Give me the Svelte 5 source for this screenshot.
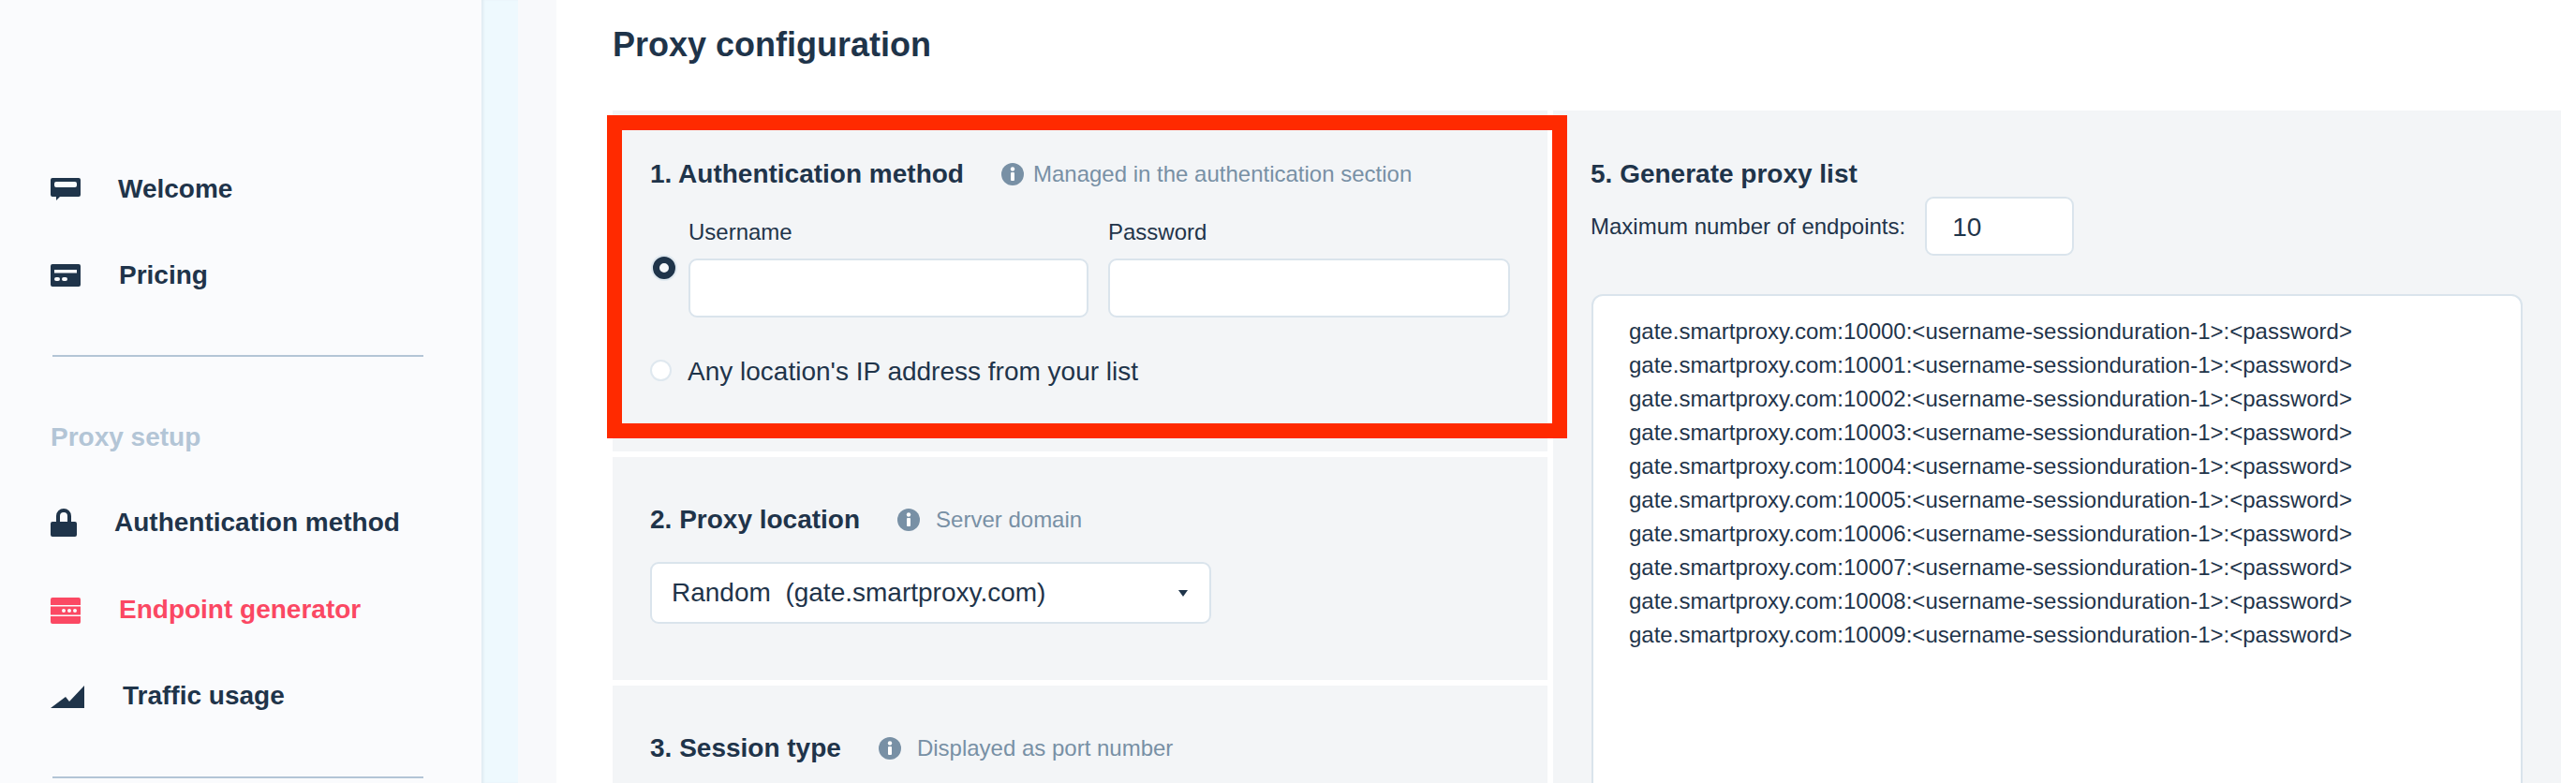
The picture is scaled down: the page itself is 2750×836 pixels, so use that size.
<script>
  const endpoints = Array.from({ length: 10 }, (_, i) => `gate.smartproxy.com:${10000 + i}:<username-sessionduration-1>:<password>`);
</script>

<div class="page">
  <aside class="sidebar">
    <nav class="nav">
      <a class="item welcome">
        <svg width="32" height="24" viewBox="0 0 32 24"><path fill-rule="evenodd" d="M2 0h28a2 2 0 0 1 2 2v16a2 2 0 0 1-2 2H10l-4 4v-4H2a2 2 0 0 1-2-2V2a2 2 0 0 1 2-2Zm4 4a2 2 0 0 0-2 2v2a2 2 0 0 0 2 2h20a2 2 0 0 0 2-2V6a2 2 0 0 0-2-2Z" /></svg>
        <span>Welcome</span>
      </a>
      <a class="item pricing">
        <svg width="32" height="24" viewBox="0 0 32 24"><path fill-rule="evenodd" d="M2 0h28a2 2 0 0 1 2 2v20a2 2 0 0 1-2 2H2a2 2 0 0 1-2-2V2a2 2 0 0 1 2-2Zm2 6v3.500h24V6ZM6 14a2 2 0 0 0 0 4h2a2 2 0 0 0 0-4Zm8 0a2 2 0 0 0 0 4h2a2 2 0 0 0 0-4Z" /></svg>
        <span>Pricing</span>
      </a>
      <hr />
      <div class="group">Proxy setup</div>
      <a class="item auth">
        <svg width="28" height="30" viewBox="0 0 28 30"><path fill-rule="evenodd" d="M6 14V8a8 8 0 0 1 16 0v6h4a2 2 0 0 1 2 2v12a2 2 0 0 1-2 2H2a2 2 0 0 1-2-2V16a2 2 0 0 1 2-2Zm4 0h8V8a4 4 0 0 0-8 0Z" /></svg>
        <span>Authentication method</span>
      </a>
      <a class="item active">
        <svg width="32" height="28" viewBox="0 0 32 28"><path d="M2 0h28a2 2 0 0 1 2 2v6H0V2a2 2 0 0 1 2-2ZM0 9.500h32v9H0ZM0 20h32v6a2 2 0 0 1-2 2H2a2 2 0 0 1-2-2Z" /><circle class="dot" cx="14" cy="14" r="2" /><circle class="dot" cx="20" cy="14" r="2" /><circle class="dot" cx="26" cy="14" r="2" /></svg>
        <span>Endpoint generator</span>
      </a>
      <a class="item traffic">
        <svg width="36" height="24" viewBox="0 0 36 24"><path d="M0 24 16 12l4 5L36 0v24Z" /></svg>
        <span>Traffic usage</span>
      </a>
      <hr />
    </nav>
  </aside>
  <div class="gutter"></div>
  <div class="gutter-two"></div>

  <main class="main">
    <h1>Proxy configuration</h1>
    <div class="columns">
      <div class="left">
        <section class="card first">
          <div class="heading">
            <h2>1. Authentication method</h2>
            <svg class="info" width="24" height="24" viewBox="0 0 24 24"><circle cx="12" cy="12" r="12" /><rect x="10" y="10" width="4" height="9" rx="1" /><circle cx="12" cy="6.500" r="2.200" /></svg>
            <span class="hint near">Managed in the authentication section</span>
          </div>
          <div class="auth-row">
            <span class="radio checked"></span>
            <label class="field">
              <span>Username</span>
              <input type="text" />
            </label>
            <label class="field">
              <span>Password</span>
              <input class="wide" type="password" />
            </label>
          </div>
          <div class="ip-row">
            <span class="radio"></span>
            <span>Any location's IP address from your list</span>
          </div>
          <div class="highlight"></div>
        </section>

        <section class="card second">
          <div class="heading">
            <h2>2. Proxy location</h2>
            <svg class="info" width="24" height="24" viewBox="0 0 24 24"><circle cx="12" cy="12" r="12" /><rect x="10" y="10" width="4" height="9" rx="1" /><circle cx="12" cy="6.500" r="2.200" /></svg>
            <span class="hint">Server domain</span>
          </div>
          <div class="select">
            <span>Random &nbsp;(gate.smartproxy.com)</span>
            <i class="caret"></i>
          </div>
        </section>

        <section class="card third">
          <div class="heading">
            <h2>3. Session type</h2>
            <svg class="info" width="24" height="24" viewBox="0 0 24 24"><circle cx="12" cy="12" r="12" /><rect x="10" y="10" width="4" height="9" rx="1" /><circle cx="12" cy="6.500" r="2.200" /></svg>
            <span class="hint">Displayed as port number</span>
          </div>
        </section>
      </div>

      <section class="right">
        <h2>5. Generate proxy list</h2>
        <div class="max-row">
          <span>Maximum number of endpoints:</span>
          <div class="number">10</div>
        </div>
        <div class="list">
          {#each endpoints as line}
            <div>{line}</div>
          {/each}
        </div>
      </section>
    </div>
  </main>
</div>

<style>
  :global(body) {
    margin: 0;
    background: #fff;
  }

  .page {
    display: flex;
    width: 2750px;
    height: 836px;
    overflow: hidden;
    font-family: 'Liberation Sans', Arial, sans-serif;
    color: #1f344a;
  }

  .sidebar {
    width: 514px;
    flex: none;
    background: #fafbfd;
    box-sizing: border-box;
    padding: 178px 0 0 54px;
  }

  .gutter {
    width: 39px;
    flex: none;
    background: #eef9fe;
    box-shadow: inset 3px 0 3px -1px #dfeaf1;
  }

  .gutter-two {
    width: 41px;
    flex: none;
    background: #f8f9fb;
  }

  .nav {
    display: flex;
    flex-direction: column;
    width: 398px;
  }

  .item {
    display: flex;
    align-items: center;
    height: 48px;
    margin-bottom: 44px;
    font-size: 28px;
    font-weight: 700;
  }

  .item svg {
    flex: none;
    fill: #1f344a;
  }

  .welcome svg { margin-right: 40px; }
  .pricing svg { margin-right: 41px; }
  .auth { margin-bottom: 45px; }
  .auth svg { margin-right: 40px; }
  .active svg { margin: 2px 41px 0 0; }
  .traffic { margin-bottom: 45px; }
  .traffic svg { margin: 2px 41px 0 0; }

  .active {
    color: #fb4863;
  }

  .active svg {
    fill: #fb4863;
  }

  .dot {
    fill: #fafbfd;
  }

  hr {
    width: 396px;
    margin: 17px 0 0 2px;
    border: none;
    border-top: 2px solid #b3c5d6;
  }

  .group {
    margin: 70px 0 51px 0;
    font-size: 28px;
    line-height: 32px;
    font-weight: 700;
    color: #b3c5d6;
  }

  .main {
    flex: 1;
    min-width: 0;
    padding: 0 16px 0 60px;
  }

  h1 {
    margin: 0;
    height: 118px;
    box-sizing: border-box;
    padding-top: 26px;
    font-size: 36px;
    line-height: 44px;
    font-weight: 700;
  }

  .columns {
    display: flex;
    gap: 6px;
  }

  .left {
    width: 998px;
    flex: none;
    display: flex;
    flex-direction: column;
    gap: 6px;
  }

  .card {
    position: relative;
    background: #f3f5f7;
    padding: 0 40px;
    box-sizing: border-box;
  }

  .first { height: 364px; padding-top: 52px; }
  .second { height: 238px; padding-top: 51px; }
  .third { height: 110px; padding-top: 51px; }

  /* red annotation drawn over the screenshot */
  .highlight {
    position: absolute;
    left: -6px;
    right: -21px;
    top: 5px;
    height: 345px;
    box-sizing: border-box;
    border: 16px solid #ff2a00;
    pointer-events: none;
  }

  .heading {
    display: flex;
    align-items: center;
    height: 32px;
  }

  h2 {
    margin: 0;
    font-size: 28px;
    line-height: 32px;
    font-weight: 700;
  }

  .info {
    flex: none;
    margin-left: 40px;
    fill: #fff;
  }

  .info circle:first-child {
    fill: #7890a5;
  }

  .hint {
    margin-left: 17px;
    font-size: 24px;
    color: #7890a5;
  }

  .hint.near {
    margin-left: 10px;
  }

  .auth-row {
    display: flex;
    align-items: flex-start;
    margin-top: 32px;
    gap: 21px;
  }

  .radio {
    flex: none;
    box-sizing: border-box;
    width: 23px;
    height: 23px;
    margin-top: -3px;
    border-radius: 50%;
    background: #fff;
    border: 2px solid #dfe8ef;
  }

  .radio.checked {
    width: 24px;
    height: 24px;
    margin: 40px -7px 0 3px;
    background: #f6f8fa;
    border: 7px solid #1f344a;
    box-shadow: 0 0 0 2px #dfe8ef;
  }

  .field {
    display: flex;
    flex-direction: column;
    font-size: 24px;
  }

  .field span {
    height: 28px;
    line-height: 28px;
    margin-bottom: 14px;
  }

  input {
    box-sizing: border-box;
    width: 427px;
    height: 63px;
    border: 2px solid #dae4ec;
    border-radius: 9px;
    background: #fff;
    outline: none;
  }

  input.wide {
    width: 429px;
  }

  .ip-row {
    display: flex;
    align-items: center;
    gap: 17px;
    margin-top: 42px;
    font-size: 28px;
  }

  .select {
    display: flex;
    align-items: center;
    justify-content: space-between;
    box-sizing: border-box;
    width: 599px;
    height: 66px;
    margin-top: 29px;
    padding: 0 23px 0 21px;
    background: #fff;
    border: 2px solid #dae4ec;
    border-radius: 9px;
    font-size: 28px;
  }

  .caret {
    width: 0;
    height: 0;
    border-left: 5.500px solid transparent;
    border-right: 5.500px solid transparent;
    border-top: 7px solid #1f344a;
  }

  .right {
    flex: 1;
    min-width: 0;
    background: #f3f5f7;
    box-sizing: border-box;
    padding: 52px 41px 0 40px;
    height: 718px;
  }

  .max-row {
    display: flex;
    align-items: center;
    gap: 21px;
    margin-top: 8px;
    font-size: 24px;
  }

  .number {
    box-sizing: border-box;
    width: 159px;
    height: 63px;
    padding-left: 27px;
    line-height: 61px;
    background: #fff;
    border: 2px solid #dae4ec;
    border-radius: 9px;
    font-size: 28px;
  }

  .list {
    box-sizing: border-box;
    height: 540px;
    margin-top: 41px;
    margin-left: 1px;
    padding: 20px 38px;
    background: #fff;
    border: 2px solid #dae4ec;
    border-radius: 12px 12px 0 0;
    font-size: 24px;
    line-height: 36px;
  }
</style>
